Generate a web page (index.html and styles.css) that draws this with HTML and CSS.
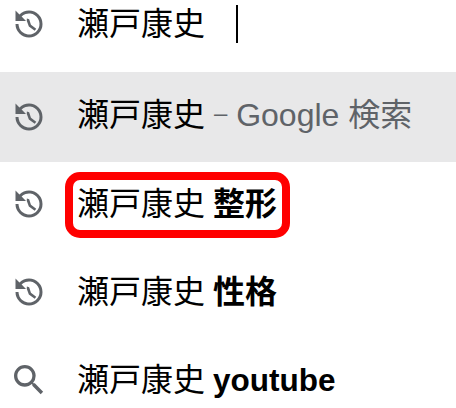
FILE: index.html
```html
<!DOCTYPE html>
<html lang="ja">
<head>
    <meta charset="UTF-8">
    <meta name="viewport" content="width=device-width, initial-scale=1.0">
    <title>Search suggestions</title>
    <link rel="stylesheet" href="styles.css">
</head>
<body>
    <svg class="icon-defs" width="0" height="0">
        <symbol id="history" viewBox="0 0 24 24">
            <path d="M12 3a9 9 0 0 0-6.36 2.64L3 3v7h7L7.05 7.05A7 7 0 1 1 5 12H3a9 9 0 1 0 9-9z"/>
            <path d="M10.6 8.4l-.1 1.5 1.4 3.7 3.9 2.9 1-1.3-3.5-2.7-1.2-3.6z"/>
        </symbol>
        <symbol id="search" viewBox="0 0 24 24">
            <path d="M15.5 14h-.79l-.28-.27A6.47 6.47 0 0 0 16 9.5 6.5 6.5 0 1 0 9.5 16c1.61 0 3.09-.59 4.23-1.57l.27.28v.79l5 4.99L20.49 19l-4.99-5zm-6 0C7.01 14 5 11.99 5 9.5S7.01 5 9.5 5 14 7.01 14 9.5 11.99 14 9.5 14z"/>
        </symbol>
    </svg>

    <ul class="suggestions">
        <li class="row row-input">
            <svg class="icon"><use href="#history"/></svg>
            <span class="text">瀬戸康史</span>
            <span class="caret"></span>
        </li>
        <li class="row row-active">
            <svg class="icon"><use href="#history"/></svg>
            <span class="text">瀬戸康史<span class="hint"> <span class="dash">–</span> Google 検索</span></span>
        </li>
        <li class="row">
            <svg class="icon"><use href="#history"/></svg>
            <span class="text marked">瀬戸康史 <b>整形</b></span>
        </li>
        <li class="row">
            <svg class="icon"><use href="#history"/></svg>
            <span class="text">瀬戸康史 <b>性格</b></span>
        </li>
        <li class="row">
            <svg class="icon icon-search"><use href="#search"/></svg>
            <span class="text">瀬戸康史 <b class="latin">youtube</b></span>
        </li>
    </ul>
</body>
</html>
```

FILE: styles.css
```css
body {
    margin: 0;
    background: #fff;
    color: #000;
    font-family: "Liberation Sans", "Noto Sans CJK JP", sans-serif;
    overflow: hidden;
}
.icon-defs {
    display: block;
}
.suggestions {
    list-style: none;
    margin: 0;
    padding: 0;
}
.row {
    display: flex;
    align-items: center;
    box-sizing: border-box;
    height: 88px;
    padding: 0 0 4px 11px;
}
.row-input {
    height: 48px;
    padding-bottom: 0;
    margin-bottom: 24px;
}
.row-active {
    height: 90px;
    padding-bottom: 1px;
    background: #e8e8e9;
}
.icon {
    width: 36px;
    height: 36px;
    margin-right: 30px;
    fill: #5f6368;
    flex: none;
}
.icon-search {
    width: 40px;
    height: 40px;
    margin-left: -2px;
    margin-right: 28px;
}
.text {
    font-size: 32px;
    line-height: 40px;
    white-space: pre;
    position: relative;
    word-spacing: -1px;
}
.hint {
    color: #5f6368;
    word-spacing: 0;
}
.dash {
    font-size: 24px;
    position: relative;
    top: -5px;
}
.latin {
    font-size: 31.5px;
}
.caret {
    width: 2px;
    height: 38px;
    margin-left: 31px;
    background: #000;
}
/* red box drawn over the suggestion */
.marked::after {
    content: "";
    position: absolute;
    left: -12px;
    right: -13px;
    top: -12px;
    bottom: -14px;
    border: 8px solid #f00;
    border-radius: 15px;
}
```
